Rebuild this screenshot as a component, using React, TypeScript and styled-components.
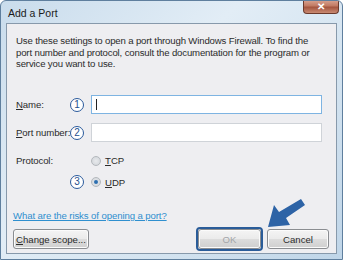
import React from "react";
import styled, { createGlobalStyle } from "styled-components";

const Global = createGlobalStyle`
  html, body {
    margin: 0;
    padding: 0;
    background: #ffffff;
  }
  body {
    font-family: "Liberation Sans", Arial, sans-serif;
  }
`;

const Frame = styled.div`
  position: relative;
  width: 343px;
  height: 260px;
  box-sizing: border-box;
  border: 1px solid #5f7f9e;
  border-radius: 6px 6px 0 0;
  background: linear-gradient(135deg, #c9dcec 0%, #e2edf6 40%, #d3e3f0 70%, #bfd5e8 100%);
  display: flex;
  flex-direction: column;
  padding: 0 5px 5px;
  overflow: hidden;
`;

const TitleBar = styled.div`
  height: 22px;
  display: flex;
  align-items: center;
  justify-content: space-between;
`;

const Title = styled.span`
  font-size: 10.5px;
  color: #1b1b1b;
  padding-left: 2px;
  margin-top: 1px;
`;

const CloseButton = styled.div`
  align-self: flex-start;
  width: 36px;
  height: 14px;
  margin-top: -1px;
  margin-right: -2px;
  box-sizing: border-box;
  border: 1px solid #6b3a2c;
  border-top: none;
  border-radius: 0 0 4px 4px;
  background: linear-gradient(180deg, #d9a593 0%, #c17a63 45%, #a4553f 55%, #c98a72 100%);
  display: flex;
  align-items: center;
  justify-content: center;
  color: #ffffff;
  font-size: 10px;
  font-weight: bold;
`;

const Client = styled.div`
  flex: 1;
  border: 1px solid #8799ab;
  background: #eeeef1;
  padding: 11px 7px 0 9px;
  display: flex;
  flex-direction: column;
  color: #2b2b2b;
  font-size: 9.6px;
`;

const Intro = styled.p`
  margin: 0 0 25px;
  line-height: 11.7px;
  letter-spacing: -0.15px;
`;

const FormGrid = styled.div`
  display: grid;
  grid-template-columns: 54px 21px 231px;
  row-gap: 9px;
  align-items: center;
`;

const Label = styled.span<{ gap?: number }>`
  white-space: nowrap;
  letter-spacing: -0.1px;
  margin-top: ${(p) => p.gap || 0}px;
`;

const Key = styled.span`
  text-decoration: underline;
`;

const Circle = styled.span`
  width: 14px;
  height: 14px;
  box-sizing: border-box;
  border: 1.6px solid #2a5a9c;
  border-radius: 50%;
  background: #ffffff;
  color: #24508f;
  font-size: 10px;
  display: flex;
  align-items: center;
  justify-content: center;
  line-height: 1;
`;

const TextBox = styled.div<{ focused?: boolean }>`
  height: 19px;
  box-sizing: border-box;
  background: #ffffff;
  border: 1px solid ${(p) => (p.focused ? "#7eb4e2" : "#cfd3d8")};
  display: flex;
  align-items: center;
  padding-left: 4px;
`;

const Caret = styled.span`
  width: 1px;
  height: 11px;
  background: #222;
`;

const RadioRow = styled.div<{ gap?: number }>`
  display: flex;
  align-items: center;
  gap: 4px;
  margin-top: ${(p) => p.gap || 0}px;
`;

const Radio = styled.span<{ checked?: boolean }>`
  width: 10px;
  height: 10px;
  box-sizing: border-box;
  border-radius: 50%;
  border: 1px solid #b4b8bd;
  background: radial-gradient(circle, #e8eaed 0%, #cfd3d8 100%);
  display: flex;
  align-items: center;
  justify-content: center;
  &::after {
    content: "";
    width: 4px;
    height: 4px;
    border-radius: 50%;
    background: ${(p) => (p.checked ? "#2d6fb0" : "transparent")};
  }
`;

const Link = styled.a`
  margin-top: 21px;
  margin-left: -3px;
  color: #2f8fcf;
  text-decoration: underline;
  font-size: 9.6px;
  letter-spacing: -0.1px;
  cursor: pointer;
`;

const ButtonBar = styled.div`
  display: flex;
  align-items: center;
  margin-top: 6px;
  margin-left: -3px;
`;

const Button = styled.div<{ disabled?: boolean; w: number }>`
  width: ${(p) => p.w}px;
  height: 20px;
  box-sizing: border-box;
  border: 1px solid #8a8d91;
  border-radius: 3px;
  background: linear-gradient(180deg, #f4f4f4 0%, #ebebeb 48%, #dcdcdc 52%, #cfcfcf 100%);
  display: flex;
  align-items: center;
  justify-content: center;
  color: ${(p) => (p.disabled ? "#a3a6a9" : "#2b2b2b")};
  font-size: 9.6px;
  box-shadow: inset 0 0 0 1px #fbfbfb;
`;

const Spacer = styled.div`
  flex: 1;
`;

const Highlight = styled.div`
  border: 2px solid #2a5c99;
  border-radius: 4px;
  margin-right: 4px;
  display: flex;
`;

const Arrow = styled.svg`
  position: absolute;
  left: 258px;
  top: 192px;
`;

export default function App() {
  return (
    <>
      <Global />
      <Frame>
        <TitleBar>
          <Title>Add a Port</Title>
          <CloseButton>✕</CloseButton>
        </TitleBar>
        <Client>
          <Intro>
            Use these settings to open a port through Windows Firewall. To find the
            <br />
            port number and protocol, consult the documentation for the program or
            <br />
            service you want to use.
          </Intro>
          <FormGrid>
            <Label>
              <Key>N</Key>ame:
            </Label>
            <Circle>1</Circle>
            <TextBox focused>
              <Caret />
            </TextBox>

            <Label>
              <Key>P</Key>ort number:
            </Label>
            <Circle>2</Circle>
            <TextBox />

            <Label gap={4}>Protocol:</Label>
            <span />
            <RadioRow gap={4}>
              <Radio />
              <span>
                <Key>T</Key>CP
              </span>
            </RadioRow>

            <span />
            <Circle>3</Circle>
            <RadioRow>
              <Radio checked />
              <span>
                <Key>U</Key>DP
              </span>
            </RadioRow>
          </FormGrid>
          <Link>What are the risks of opening a port?</Link>
          <ButtonBar>
            <Button w={76}>
              <Key>C</Key>hange scope...
            </Button>
            <Spacer />
            <Highlight>
              <Button w={63} disabled>
                OK
              </Button>
            </Highlight>
            <Button w={62}>Cancel</Button>
          </ButtonBar>
        </Client>
        <Arrow width="50" height="40" viewBox="0 0 50 40">
          <polygon points="42,6 46,12 27,25 31,32 9,34 15,12 20,19" fill="#2d63a6" />
        </Arrow>
      </Frame>
    </>
  );
}
